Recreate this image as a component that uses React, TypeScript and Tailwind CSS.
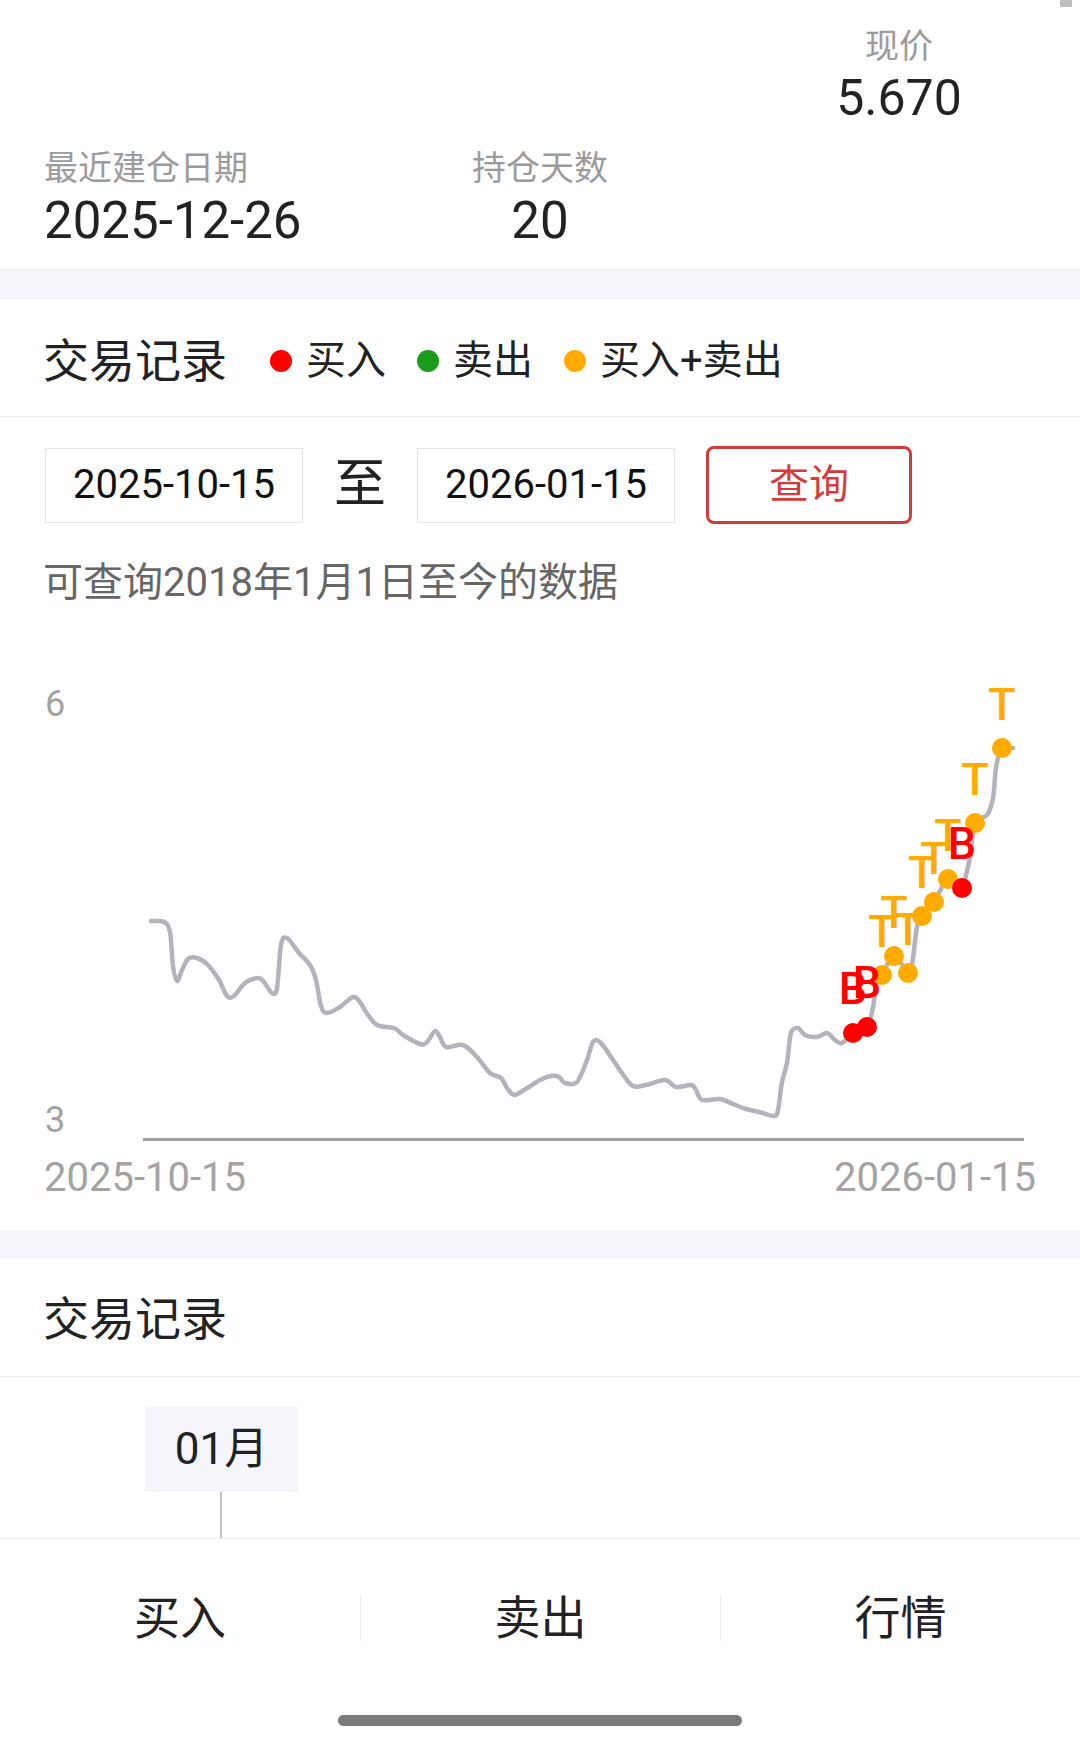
import React from "react";

type Pt = [number, number];

// price curve, page coordinates
const curve: Pt[] = [
  [151, 921], [164, 922], [170, 932], [173, 966], [177, 981], [182, 970], [188, 959], [197, 958],
  [208, 965], [219, 980], [227, 996], [234, 996], [245, 983], [258, 978], [264, 982], [272, 993],
  [277, 988], [281, 945], [287, 938], [299, 953], [310, 965], [316, 980], [321, 1006], [327, 1013],
  [340, 1007], [353, 997], [360, 1002], [366, 1012], [377, 1025], [394, 1028], [403, 1035], [420, 1044],
  [427, 1042], [435, 1031], [440, 1037], [446, 1047], [463, 1045], [477, 1057], [490, 1073], [501, 1078],
  [507, 1088], [514, 1095], [524, 1090], [540, 1080], [551, 1076], [559, 1077], [565, 1083], [577, 1082],
  [587, 1060], [593, 1042], [600, 1042], [611, 1057], [622, 1073], [633, 1086], [646, 1085], [665, 1080],
  [676, 1087], [691, 1085], [696, 1090], [702, 1100], [720, 1099], [733, 1104], [746, 1109], [759, 1112],
  [774, 1116], [778, 1110], [782, 1082], [787, 1063], [791, 1033], [798, 1028], [805, 1035], [817, 1037],
  [827, 1033], [835, 1040], [842, 1043], [853, 1033], [867, 1027], [873, 1007], [877, 982], [882, 975],
  [894, 956], [908, 973], [912, 965], [917, 927], [922, 916], [934, 902], [948, 879], [962, 888],
  [966, 875], [970, 857], [975, 823], [987, 815], [993, 798], [996, 768], [1001, 750], [1013, 748],
];

const buys: Pt[] = [[853, 1033], [867, 1027], [962, 888]];
const both: Pt[] = [[882, 975], [894, 956], [908, 973], [922, 916], [934, 902], [948, 879], [975, 823], [1002, 748]];

function smooth(pts: Pt[]) {
  let d = `M${pts[0][0]},${pts[0][1]}`;
  for (let i = 0; i < pts.length - 1; i++) {
    const p0 = pts[i - 1] || pts[i];
    const p1 = pts[i];
    const p2 = pts[i + 1];
    const p3 = pts[i + 2] || p2;
    const c1x = p1[0] + (p2[0] - p0[0]) / 6;
    const c1y = p1[1] + (p2[1] - p0[1]) / 6;
    const c2x = p2[0] - (p3[0] - p1[0]) / 6;
    const c2y = p2[1] - (p3[1] - p1[1]) / 6;
    d += ` C${c1x},${c1y} ${c2x},${c2y} ${p2[0]},${p2[1]}`;
  }
  return d;
}

function Chart() {
  return (
    <svg width={1080} height={628} viewBox="0 603 1080 628" className="block">
      <g fontFamily="Roboto, sans-serif" fill="#a3a3a3">
        <text x={45} y={716} fontSize={36}>6</text>
        <text x={45} y={1132} fontSize={36}>3</text>
        <text x={44} y={1191} fontSize={40}>2025-10-15</text>
        <text x={1036} y={1191} fontSize={40} textAnchor="end">2026-01-15</text>
      </g>
      <line x1={143} y1={1139.5} x2={1024} y2={1139.5} stroke="#a0a0a0" strokeWidth={3} />
      <path d={smooth(curve)} fill="none" stroke="#b3b3bb" strokeWidth={4.5} strokeLinejoin="round" strokeLinecap="round" />
      {both.map(([x, y], i) => (
        <circle key={"o" + i} cx={x} cy={y} r={10} fill="#ffab00" />
      ))}
      {buys.map(([x, y], i) => (
        <circle key={"r" + i} cx={x} cy={y} r={10} fill="#ff0000" />
      ))}
      <g fontFamily="Roboto, sans-serif" fontSize={45} fontWeight={500} textAnchor="middle">
        {both.map(([x, y], i) => (
          <text key={"t" + i} x={x} y={y - 28} fill="#ffab00">T</text>
        ))}
        {buys.map(([x, y], i) => (
          <text key={"b" + i} x={x} y={y - 29} fill="#ff0000">B</text>
        ))}
      </g>
    </svg>
  );
}

function Dot({ color }: { color: string }) {
  return <span className={`h-[22px] w-[22px] rounded-full ${color}`} />;
}

export default function App() {
  return (
    <div className="relative min-h-[1750px] w-[1080px] bg-white font-[Roboto,'Noto_Sans_CJK_SC',sans-serif] text-[#222]">
      {/* scroll indicator */}
      <div className="absolute right-[8px] top-0 h-[7px] w-[12px] bg-[#bdbdbd]" />

      {/* Summary */}
      <div className="h-[270px] border-b border-[#ececf0] pl-[44px] pt-[29px]">
        <div className="grid grid-cols-[316px_360px_358px]">
          <div />
          <div />
          <div className="flex flex-col items-center">
            <span className="text-[34px] leading-none text-[#9b9b9b]">现价</span>
            <span className="mt-[10px] text-[50px] leading-none">5.670</span>
          </div>
        </div>
        <div className="mt-[28px] grid grid-cols-[316px_360px_358px]">
          <div className="flex flex-col">
            <span className="text-[34px] leading-none text-[#9b9b9b]">最近建仓日期</span>
            <span className="mt-[10px] text-[51px] leading-none">2025-12-26</span>
          </div>
          <div className="flex flex-col items-center">
            <span className="text-[34px] leading-none text-[#9b9b9b]">持仓天数</span>
            <span className="mt-[10px] text-[51px] leading-none">20</span>
          </div>
          <div />
        </div>
      </div>

      <div className="h-[30px] bg-[#f5f6fc]" />

      {/* Legend */}
      <div className="flex h-[117px] items-center border-b border-[#ebebeb] pl-[43px] pt-[5px]">
        <span className="text-[46px] leading-none">交易记录</span>
        <div className="ml-[43px] flex items-center">
          <Dot color="bg-[#ff0000]" />
          <span className="ml-[14px] text-[40px] leading-none">买入</span>
          <span className="ml-[31px]" />
          <Dot color="bg-[#1a9c1a]" />
          <span className="ml-[14px] text-[40px] leading-none">卖出</span>
          <span className="ml-[31px]" />
          <Dot color="bg-[#ffab00]" />
          <span className="ml-[14px] text-[40px] leading-none">买入+卖出</span>
        </div>
      </div>

      {/* Query */}
      <div className="mt-[29px] flex h-[78px] items-center pl-[45px]">
        <div className="flex h-[75px] w-[258px] items-center justify-center border border-[#e4e4e4] text-[40px] leading-none text-[#111]">
          2025-10-15
        </div>
        <div className="w-[114px] text-center text-[52px] leading-none">至</div>
        <div className="flex h-[75px] w-[258px] items-center justify-center border border-[#e4e4e4] text-[40px] leading-none text-[#111]">
          2026-01-15
        </div>
        <button className="ml-[31px] flex h-[78px] w-[206px] items-center justify-center rounded-[8px] border-[3px] border-[#d43c3c] text-[40px] leading-none text-[#d43c3c]">
          查询
        </button>
      </div>
      <div className="mt-[39px] pl-[43px] text-[40px] leading-none text-[#666]">可查询2018年1月1日至今的数据</div>

      <Chart />

      <div className="h-[28px] bg-[#f5f6fc]" />

      {/* Records */}
      <div className="flex h-[118px] items-center border-b border-[#ebebeb] pl-[43px] pt-[2px]">
        <span className="text-[46px] leading-none">交易记录</span>
      </div>
      <div className="h-[162px] border-b border-[#ebebeb] pl-[145px] pt-[29px]">
        <div className="flex h-[86px] w-[153px] items-center justify-center bg-[#f5f6fc] text-[44px] leading-none">01月</div>
        <div className="ml-[75px] h-[46px] w-[2px] bg-[#c4c4c4]" />
      </div>

      {/* Bottom bar */}
      <div className="mt-[56px] grid h-[46px] grid-cols-3">
        <div className="flex items-center justify-center text-[46px] leading-none">买入</div>
        <div className="flex items-center justify-center border-l border-[#ededed] text-[46px] leading-none">卖出</div>
        <div className="flex items-center justify-center border-l border-[#ededed] text-[46px] leading-none">行情</div>
      </div>
      <div className="mx-auto mt-[74px] h-[11px] w-[404px] rounded-full bg-[#7a7a7a]" />
    </div>
  );
}
